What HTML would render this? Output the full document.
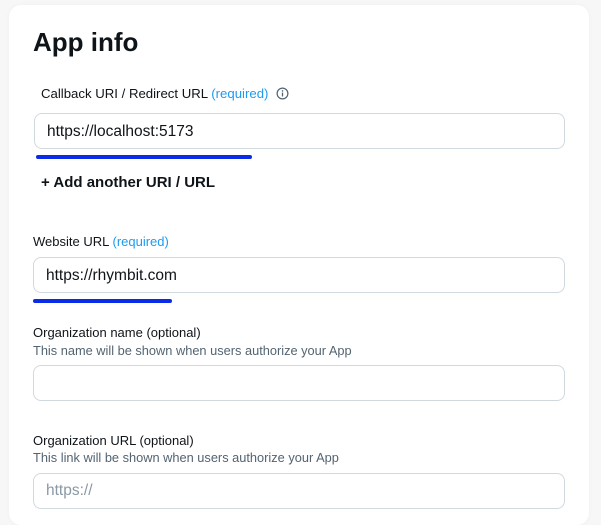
<!DOCTYPE html>
<html><head><meta charset="utf-8"><style>
*{margin:0;padding:0;box-sizing:border-box}
body{width:601px;height:495px;background:#f7f7f8;position:relative;overflow:hidden;font-family:"Liberation Sans",sans-serif;color:#0f1419}
.card{position:absolute;left:9px;top:5px;width:580px;height:520px;background:#fff;border-radius:12px;box-shadow:0 0 4px rgba(0,0,0,0.04)}
.a{position:absolute;white-space:nowrap}
.in{position:absolute;border:1px solid #cfd9de;border-radius:8px;background:#fff;height:36px;width:531px;font-size:15.5px;padding-left:12px;line-height:36px}
.bar{position:absolute;height:4px;background:#0a2ce8;border-radius:2px}
.req{color:#1d9bf0}
.lab{font-size:13px}
.desc{font-size:12.8px;color:#536471}
</style></head><body>
<div class="card"></div>
<div class="a" style="left:33px;top:27px;font-size:26px;font-weight:bold">App info</div>
<div class="a lab" style="left:41px;top:86px;font-size:13.2px">Callback URI / Redirect URL <span class="req">(required)</span>
<svg width="13" height="13" viewBox="0 0 14 14" style="vertical-align:-2px;margin-left:4px"><circle cx="7" cy="7" r="5.8" fill="none" stroke="#536471" stroke-width="1.3"/><rect x="6.3" y="6" width="1.4" height="4.2" fill="#536471"/><circle cx="7" cy="4.2" r="0.9" fill="#536471"/></svg></div>
<div class="in" style="left:34px;top:113px;width:531px">https://localhost:5173</div>
<div class="bar" style="left:36px;top:155px;width:216px"></div>
<div class="a" style="left:41px;top:174px;font-size:15px;font-weight:bold">+ Add another URI / URL</div>
<div class="a lab" style="left:33px;top:234px">Website URL <span class="req">(required)</span></div>
<div class="in" style="left:33px;top:257px;width:532px">https://rhymbit.com</div>
<div class="bar" style="left:33px;top:299px;width:139px"></div>
<div class="a lab" style="left:33px;top:325px">Organization name (optional)</div>
<div class="a desc" style="left:33px;top:343px">This name will be shown when users authorize your App</div>
<div class="in" style="left:33px;top:365px;width:532px"></div>
<div class="a lab" style="left:33px;top:433px">Organization URL (optional)</div>
<div class="a desc" style="left:33px;top:450px">This link will be shown when users authorize your App</div>
<div class="in" style="left:33px;top:473px;width:532px;color:#8b98a5;line-height:34px">https://</div>
</body></html>
